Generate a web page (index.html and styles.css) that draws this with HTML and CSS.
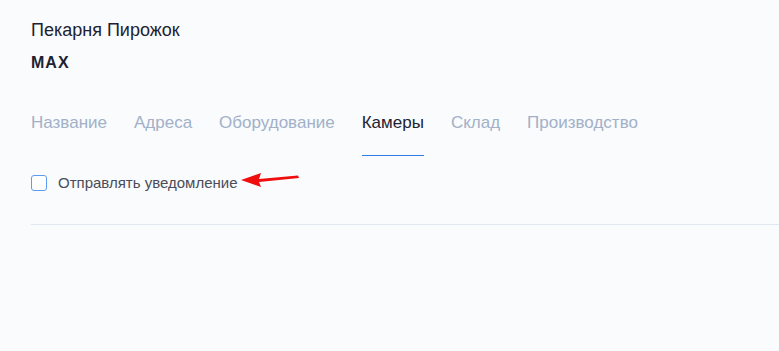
FILE: index.html
```
<!DOCTYPE html>
<html lang="ru">
<head>
    <meta charset="UTF-8">
    <title>Пекарня Пирожок</title>
    <link rel="stylesheet" href="styles.css">
</head>
<body>
<section class="page">
    <h1 class="title">Пекарня Пирожок</h1>
    <h2 class="subtitle">МАХ</h2>
    <nav class="tabs">
        <a href="#">Название</a>
        <a href="#">Адреса</a>
        <a href="#">Оборудование</a>
        <a class="active" href="#">Камеры</a>
        <a href="#">Склад</a>
        <a href="#">Производство</a>
    </nav>
    <div class="option">
        <label>
            <span class="check"></span>
            <span class="text">Отправлять уведомление</span>
        </label>
        <svg class="arrow" width="62" height="18" viewBox="0 0 62 18">
            <path d="M1 9 L21 2 L19 8 L58 4.5 L59 7 L19 11 L21 16 Z" fill="#ef0d0d"/>
        </svg>
    </div>
    <div class="divider"></div>
</section>
</body>
</html>
```

FILE: styles.css
```
*{
    margin: 0;
    padding: 0;
    box-sizing: border-box;
}
body{
    background: #f9fbfd;
    font-family: "Liberation Sans", Arial, sans-serif;
    color: #1e2230;
}
a{text-decoration: none;}

.page{
    padding: 19px 0 0 31px;
}
.title{
    font-size: 18px;
    font-weight: normal;
    line-height: 22px;
}
.subtitle{
    font-size: 16px;
    font-weight: bold;
    letter-spacing: 1px;
    line-height: 20px;
    margin-top: 12px;
}

.tabs{
    display: flex;
    gap: 27px;
    margin-top: 40px;
}
.tabs > a{
    display: block;
    font-size: 17px;
    line-height: 20px;
    color: #a2b0c8;
    padding-bottom: 22px;
    border-bottom: 1px solid transparent;
}
.tabs > a.active{
    color: #1e2230;
    border-bottom-color: #2f7ae6;
}

.option{
    display: flex;
    align-items: center;
    margin-top: 18px;
}
.option > label{
    display: flex;
    align-items: center;
    gap: 11px;
}
.check{
    width: 16px;
    height: 16px;
    border: 1px solid #5d9bf2;
    border-radius: 3px;
    background: #ffffff;
}
.text{
    font-size: 15px;
    color: #4a4c58;
}
.arrow{
    margin-left: 2px;
    margin-top: -6px;
}

.divider{
    margin-top: 33px;
    height: 1px;
    background: #e1e8f3;
}
```
